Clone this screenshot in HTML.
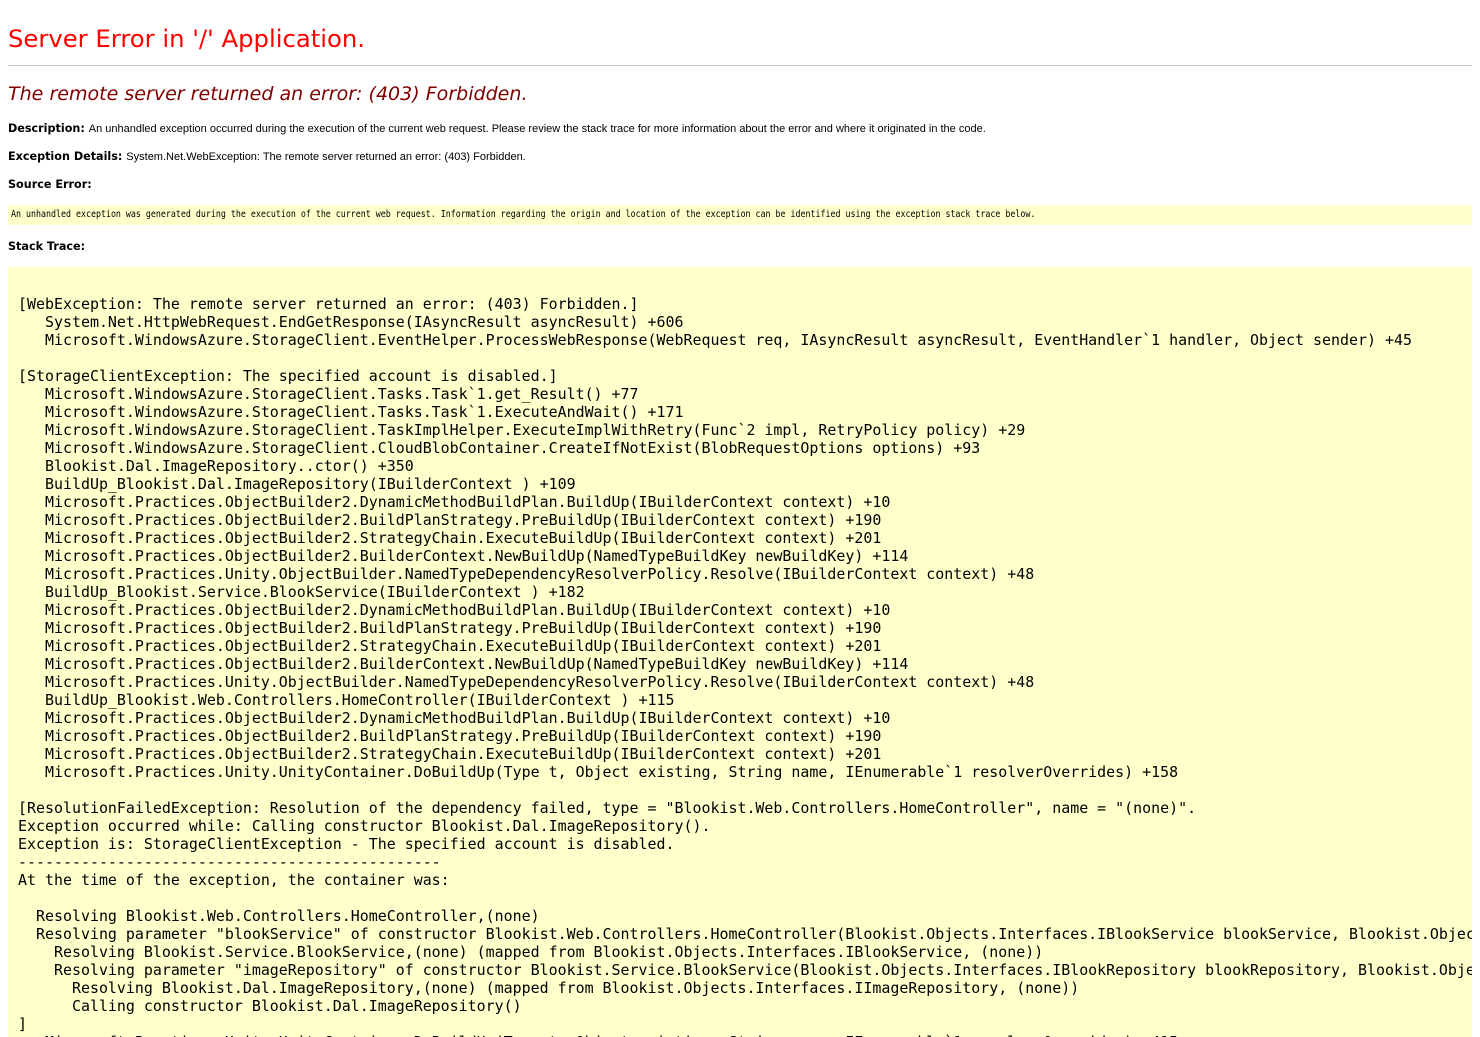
<!DOCTYPE html>
<html><head><meta charset="utf-8"><style>
html,body{margin:0;padding:0;background:#fff;width:1480px;height:1037px;overflow:hidden}
body{font-family:"Liberation Sans",Arial,sans-serif;font-size:11px;color:#000;position:relative}
.a{position:absolute;left:8px;white-space:nowrap}
h1{margin:0;font-family:"DejaVu Sans",Verdana,sans-serif;font-weight:normal;font-size:24.3px;color:#f00;top:24px}
h2{margin:0;font-family:"DejaVu Sans",Verdana,sans-serif;font-weight:normal;font-style:italic;font-size:19.05px;color:#800000;top:83px}
hr{position:absolute;left:8px;top:65px;width:1464px;margin:0;border:0;border-top:1px solid #c0c0c0}
b{font-family:"DejaVu Sans",Verdana,sans-serif;font-size:11.2px}
.src{position:absolute;left:8px;top:205px;width:1464px;height:20px;background:#ffffcc;line-height:20px;overflow:hidden}
.src span{position:absolute;left:3px;top:0;font-family:"DejaVu Sans Mono",monospace;font-size:10px;white-space:nowrap;transform:scaleX(0.83);transform-origin:0 50%}
pre{position:absolute;left:8px;top:267px;width:1464px;height:800px;margin:0;background:#ffffcc;font-family:"DejaVu Sans Mono",monospace;font-size:14.94px;line-height:18px;padding:10px 0 0 10px;box-sizing:border-box;overflow:hidden}
</style></head><body>
<h1 class="a">Server Error in '/' Application.</h1>
<hr>
<h2 class="a">The remote server returned an error: (403) Forbidden.</h2>
<div class="a" style="top:122px"><b>Description: </b>An unhandled exception occurred during the execution of the current web request. Please review the stack trace for more information about the error and where it originated in the code.</div>
<div class="a" style="top:150px"><b>Exception Details: </b>System.Net.WebException: The remote server returned an error: (403) Forbidden.</div>
<div class="a" style="top:178px"><b>Source Error:</b></div>
<div class="src"><span>An unhandled exception was generated during the execution of the current web request. Information regarding the origin and location of the exception can be identified using the exception stack trace below.</span></div>
<div class="a" style="top:240px"><b>Stack Trace:</b></div>
<pre>

[WebException: The remote server returned an error: (403) Forbidden.]
   System.Net.HttpWebRequest.EndGetResponse(IAsyncResult asyncResult) +606
   Microsoft.WindowsAzure.StorageClient.EventHelper.ProcessWebResponse(WebRequest req, IAsyncResult asyncResult, EventHandler`1 handler, Object sender) +45

[StorageClientException: The specified account is disabled.]
   Microsoft.WindowsAzure.StorageClient.Tasks.Task`1.get_Result() +77
   Microsoft.WindowsAzure.StorageClient.Tasks.Task`1.ExecuteAndWait() +171
   Microsoft.WindowsAzure.StorageClient.TaskImplHelper.ExecuteImplWithRetry(Func`2 impl, RetryPolicy policy) +29
   Microsoft.WindowsAzure.StorageClient.CloudBlobContainer.CreateIfNotExist(BlobRequestOptions options) +93
   Blookist.Dal.ImageRepository..ctor() +350
   BuildUp_Blookist.Dal.ImageRepository(IBuilderContext ) +109
   Microsoft.Practices.ObjectBuilder2.DynamicMethodBuildPlan.BuildUp(IBuilderContext context) +10
   Microsoft.Practices.ObjectBuilder2.BuildPlanStrategy.PreBuildUp(IBuilderContext context) +190
   Microsoft.Practices.ObjectBuilder2.StrategyChain.ExecuteBuildUp(IBuilderContext context) +201
   Microsoft.Practices.ObjectBuilder2.BuilderContext.NewBuildUp(NamedTypeBuildKey newBuildKey) +114
   Microsoft.Practices.Unity.ObjectBuilder.NamedTypeDependencyResolverPolicy.Resolve(IBuilderContext context) +48
   BuildUp_Blookist.Service.BlookService(IBuilderContext ) +182
   Microsoft.Practices.ObjectBuilder2.DynamicMethodBuildPlan.BuildUp(IBuilderContext context) +10
   Microsoft.Practices.ObjectBuilder2.BuildPlanStrategy.PreBuildUp(IBuilderContext context) +190
   Microsoft.Practices.ObjectBuilder2.StrategyChain.ExecuteBuildUp(IBuilderContext context) +201
   Microsoft.Practices.ObjectBuilder2.BuilderContext.NewBuildUp(NamedTypeBuildKey newBuildKey) +114
   Microsoft.Practices.Unity.ObjectBuilder.NamedTypeDependencyResolverPolicy.Resolve(IBuilderContext context) +48
   BuildUp_Blookist.Web.Controllers.HomeController(IBuilderContext ) +115
   Microsoft.Practices.ObjectBuilder2.DynamicMethodBuildPlan.BuildUp(IBuilderContext context) +10
   Microsoft.Practices.ObjectBuilder2.BuildPlanStrategy.PreBuildUp(IBuilderContext context) +190
   Microsoft.Practices.ObjectBuilder2.StrategyChain.ExecuteBuildUp(IBuilderContext context) +201
   Microsoft.Practices.Unity.UnityContainer.DoBuildUp(Type t, Object existing, String name, IEnumerable`1 resolverOverrides) +158

[ResolutionFailedException: Resolution of the dependency failed, type = "Blookist.Web.Controllers.HomeController", name = "(none)".
Exception occurred while: Calling constructor Blookist.Dal.ImageRepository().
Exception is: StorageClientException - The specified account is disabled.
-----------------------------------------------
At the time of the exception, the container was:

  Resolving Blookist.Web.Controllers.HomeController,(none)
  Resolving parameter "blookService" of constructor Blookist.Web.Controllers.HomeController(Blookist.Objects.Interfaces.IBlookService blookService, Blookist.Objects.Interfaces.IImageRepository imageRepository)
    Resolving Blookist.Service.BlookService,(none) (mapped from Blookist.Objects.Interfaces.IBlookService, (none))
    Resolving parameter "imageRepository" of constructor Blookist.Service.BlookService(Blookist.Objects.Interfaces.IBlookRepository blookRepository, Blookist.Objects.Interfaces.IImageRepository imageRepository)
      Resolving Blookist.Dal.ImageRepository,(none) (mapped from Blookist.Objects.Interfaces.IImageRepository, (none))
      Calling constructor Blookist.Dal.ImageRepository()
]
   Microsoft.Practices.Unity.UnityContainer.DoBuildUp(Type t, Object existing, String name, IEnumerable`1 resolverOverrides) +415
</pre>
</body></html>
